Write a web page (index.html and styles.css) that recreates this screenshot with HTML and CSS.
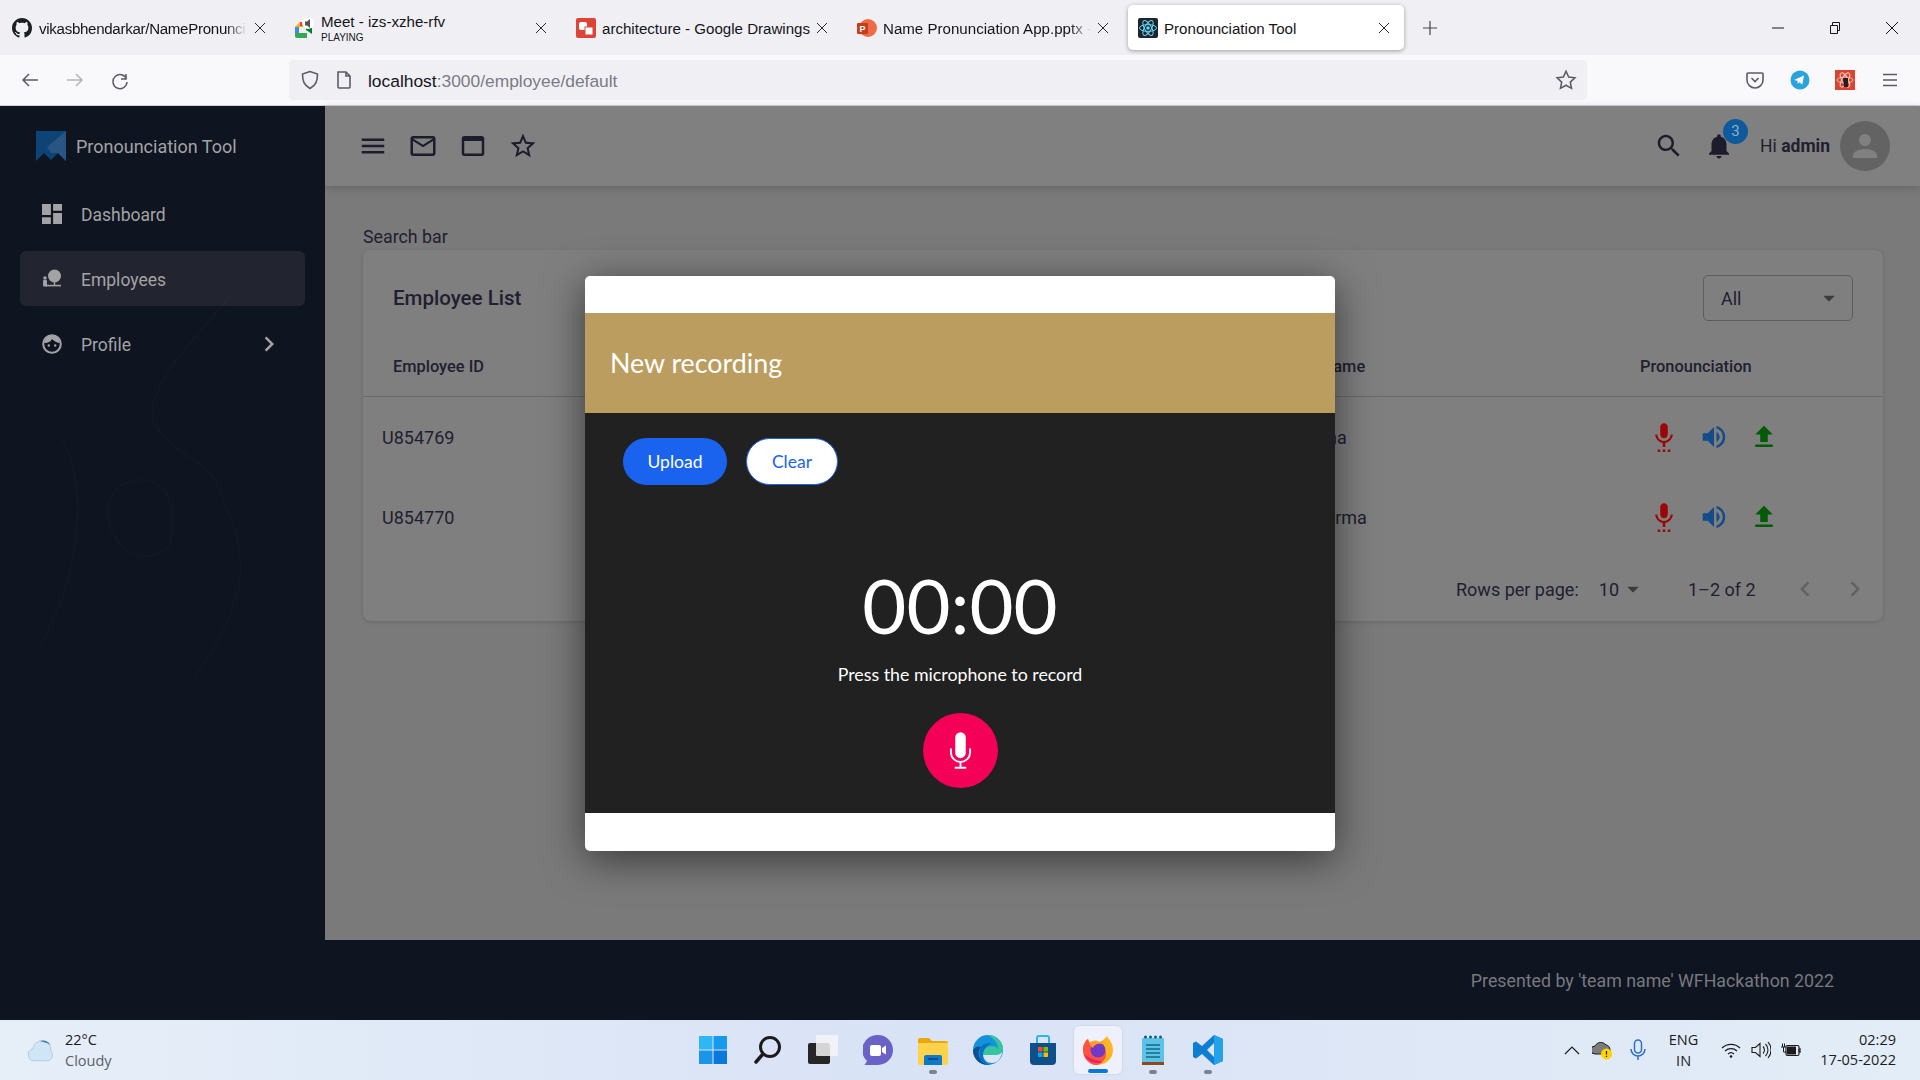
FILE: index.html
```html
<!DOCTYPE html>
<html lang="en">
<head>
    <meta charset="UTF-8">
    <title>Pronounciation Tool</title>
    <link rel="stylesheet" href="styles.css">
</head>
<body>
    <div class="tabbar">
        <div class="tab">
            <svg class="tab-icon" viewBox="0 0 16 16"><path fill="#1b1f23" d="M8 0C3.58 0 0 3.58 0 8c0 3.54 2.29 6.53 5.47 7.59.4.07.55-.17.55-.38 0-.19-.01-.82-.01-1.49-2.01.37-2.53-.49-2.69-.94-.09-.23-.48-.94-.82-1.13-.28-.15-.68-.52-.01-.53.63-.01 1.08.58 1.23.82.72 1.21 1.87.87 2.33.66.07-.52.28-.87.51-1.07-1.78-.2-3.64-.89-3.64-3.95 0-.87.31-1.59.82-2.15-.08-.2-.36-1.02.08-2.12 0 0 .67-.21 2.2.82.64-.18 1.32-.27 2-.27.68 0 1.36.09 2 .27 1.53-1.04 2.2-.82 2.2-.82.44 1.1.16 1.92.08 2.12.51.56.82 1.27.82 2.15 0 3.07-1.87 3.75-3.65 3.95.29.25.54.73.54 1.48 0 1.07-.01 1.93-.01 2.2 0 .21.15.46.55.38A8.013 8.013 0 0016 8c0-4.42-3.58-8-8-8z"/></svg>
            <span class="tab-title fade tight">vikasbhendarkar/NamePronunci</span>
            <svg class="tab-close" viewBox="0 0 12 12"><path d="M1 1l10 10M11 1L1 11"/></svg>
        </div>
        <div class="tab">
            <svg class="tab-icon" viewBox="0 0 20 20">
                <path fill="#f4b400" d="M0 9 5 4h5v5z"/>
                <path fill="#ea4335" d="M5 4h6v4H5z"/>
                <path fill="#4285f4" d="M0 9h4v7H0z"/>
                <path fill="#34a853" d="M0 15h12v5H2a2 2 0 0 1-2-2z"/>
                <path fill="#00832d" d="M11 8l6-4v12l-6-4z"/>
                <circle cx="13" cy="5" r="6" fill="#fff"/>
                <path fill="#555" d="M10 3.500h2L15 1v9l-3-2.500h-2z"/>
            </svg>
            <span class="tab-title two-line">Meet - izs-xzhe-rfv<small>PLAYING</small></span>
            <svg class="tab-close" viewBox="0 0 12 12"><path d="M1 1l10 10M11 1L1 11"/></svg>
        </div>
        <div class="tab">
            <svg class="tab-icon" viewBox="0 0 20 20">
                <rect width="20" height="20" rx="2" fill="#db4437"/>
                <rect x="3" y="4" width="8" height="8" rx="2" fill="#fff"/>
                <rect x="9" y="9" width="8" height="8" fill="#fff" stroke="#db4437"/>
            </svg>
            <span class="tab-title">architecture - Google Drawings</span>
            <svg class="tab-close" viewBox="0 0 12 12"><path d="M1 1l10 10M11 1L1 11"/></svg>
        </div>
        <div class="tab">
            <svg class="tab-icon" viewBox="0 0 20 20">
                <circle cx="11" cy="10" r="9" fill="#ed6c47"/>
                <rect x="0" y="5" width="11" height="11" rx="1" fill="#c43e1c"/>
                <text x="2.500" y="14" class="ppt-letter">P</text>
            </svg>
            <span class="tab-title fade">Name Pronunciation App.pptx -</span>
            <svg class="tab-close" viewBox="0 0 12 12"><path d="M1 1l10 10M11 1L1 11"/></svg>
        </div>
        <div class="tab tab-active">
            <svg class="tab-icon" viewBox="0 0 20 20">
                <rect width="20" height="20" rx="2" fill="#20232a"/>
                <g fill="none" stroke="#61dafb" stroke-width="1">
                    <ellipse cx="10" cy="10" rx="8.500" ry="3.400"/>
                    <ellipse cx="10" cy="10" rx="8.500" ry="3.400" transform="rotate(60 10 10)"/>
                    <ellipse cx="10" cy="10" rx="8.500" ry="3.400" transform="rotate(120 10 10)"/>
                </g>
                <circle cx="10" cy="10" r="1.700" fill="#61dafb"/>
            </svg>
            <span class="tab-title">Pronounciation Tool</span>
            <svg class="tab-close" viewBox="0 0 12 12"><path d="M1 1l10 10M11 1L1 11"/></svg>
        </div>
        <svg class="new-tab" viewBox="0 0 16 16"><path d="M8 1v14M1 8h14" stroke="#45454d" stroke-width="1.200" fill="none"/></svg>
        <div class="window-btns">
            <svg viewBox="0 0 12 12"><path d="M0 6h12" stroke="#15141a" fill="none"/></svg>
            <svg viewBox="0 0 12 12"><path d="M1.500 3.500h7v8h-7zM3.500 3.500v-3h7v8h-2" stroke="#15141a" fill="none"/></svg>
            <svg viewBox="0 0 12 12"><path d="M0 0l12 12M12 0L0 12" stroke="#15141a" fill="none"/></svg>
        </div>
    </div>

    <div class="toolbar">
        <svg class="nav-icon" viewBox="0 0 20 20"><path d="M18 10H3M9 4l-6 6 6 6" stroke="#5b5b66" stroke-width="1.500" fill="none"/></svg>
        <svg class="nav-icon" viewBox="0 0 20 20"><path d="M2 10h15M11 4l6 6-6 6" stroke="#b4b4ba" stroke-width="1.500" fill="none"/></svg>
        <svg class="nav-icon" viewBox="0 0 20 20"><path d="M16 4v5h-5M16.500 9A7 7 0 1 0 17 12" stroke="#5b5b66" stroke-width="1.500" fill="none"/></svg>
        <div class="urlbar">
            <svg class="url-icon" viewBox="0 0 20 20"><path d="M10 1.500 2.500 4c0 7 1.500 11 7.500 14.500C16 15 17.500 11 17.500 4z" stroke="#5b5b66" stroke-width="1.600" fill="none"/></svg>
            <svg class="url-icon" viewBox="0 0 20 20"><path d="M4 2h8l4 4v11a1 1 0 0 1-1 1H5a1 1 0 0 1-1-1zM12 2v4h4" stroke="#5b5b66" stroke-width="1.600" fill="none"/></svg>
            <span class="url-text"><b>localhost</b>:3000/employee/default</span>
            <svg class="url-star" viewBox="0 0 24 24"><path d="M12 2.500l2.900 6.300 6.800.8-5 4.700 1.300 6.800-6-3.400-6 3.400 1.300-6.800-5-4.700 6.800-.8z" stroke="#5b5b66" stroke-width="1.700" fill="none"/></svg>
        </div>
        <div class="ext-icons">
            <svg viewBox="0 0 20 20"><path d="M3 3h14a1 1 0 0 1 1 1v6a8 8 0 0 1-16 0V4a1 1 0 0 1 1-1zM6.500 8 10 11.500 13.500 8" stroke="#5b5b66" stroke-width="1.600" fill="none"/></svg>
            <svg viewBox="0 0 20 20"><circle cx="10" cy="10" r="9.500" fill="#2aa3dd"/><path d="M4 10l10-4.500-1.700 9-3-2.200-1.500 1.500-.4-3z" fill="#fff"/></svg>
            <svg viewBox="0 0 20 20">
                <rect width="20" height="20" fill="#d9432f"/>
                <g fill="none" stroke="#f3c6bd" stroke-width=".9">
                    <ellipse cx="10" cy="10" rx="8" ry="3"/>
                    <ellipse cx="10" cy="10" rx="8" ry="3" transform="rotate(60 10 10)"/>
                    <ellipse cx="10" cy="10" rx="8" ry="3" transform="rotate(120 10 10)"/>
                </g>
                <path d="M8 8h5v9H9z" fill="#231f20"/>
            </svg>
            <svg viewBox="0 0 20 20"><path d="M3 4.500h14M3 10h14M3 15.500h14" stroke="#5b5b66" stroke-width="1.600" fill="none"/></svg>
        </div>
    </div>

    <div class="app">
        <aside class="sidebar">
            <svg class="sidebar-map" viewBox="0 0 325 914"><path d="M230 190c-30 40-90 90-75 130 30 40 60 30 70 80 20 40 30 90-30 170M120 380c40-20 60 10 50 60-20 20-50 10-60-20-5-20 0-30 10-40M60 330c30 50 20 140-20 210" fill="none" stroke="#fff" stroke-opacity=".02" stroke-width="1.500"/></svg>
            <div class="brand">
                <svg class="brand-logo" viewBox="0 0 30 30">
                    <path fill="#0e4376" d="M0 0h30v30l-8-8-7 7-7-7-8 8z"/>
                    <path fill="#285583" d="M30 0v30l-8-8-7 0-4-6z"/>
                </svg>
                <span>Pronounciation Tool</span>
            </div>
            <nav class="side-nav">
                <a class="side-link">
                    <svg class="side-icon" viewBox="3 3 18 18"><path d="M3 13h8V3H3v10zm0 8h8v-6H3v6zm10 0h8V11h-8v10zm0-18v6h8V3h-8z"/></svg>
                    <span>Dashboard</span>
                </a>
                <a class="side-link side-link-active">
                    <svg class="side-icon" viewBox="0 0 20 20">
                        <circle cx="12.500" cy="7" r="6.500"/>
                        <rect x="11.800" y="12" width="1.400" height="5"/>
                        <rect x="3" y="15.800" width="16" height="1.600"/>
                        <circle cx="3" cy="9" r="1.800"/>
                        <rect x="1" y="11" width="4" height="6.400" rx="1"/>
                    </svg>
                    <span>Employees</span>
                </a>
                <a class="side-link">
                    <svg class="side-icon" viewBox="0 0 20 20">
                        <circle cx="10" cy="10" r="8.800" fill="none" stroke="currentColor" stroke-width="2"/>
                        <path d="M2 9c5 0 7-2 8-4 2 2 5 4 8 4-1-5-4-8-8-8S3 4 2 9z"/>
                        <circle cx="6.800" cy="11.500" r="1.200"/>
                        <circle cx="13.200" cy="11.500" r="1.200"/>
                    </svg>
                    <span>Profile</span>
                    <svg class="side-chevron" viewBox="0 0 24 24"><path d="M10 6L8.590 7.410 13.170 12l-4.580 4.590L10 18l6-6z"/></svg>
                </a>
            </nav>
        </aside>

        <div class="main">
            <header class="topbar">
                <div class="topbar-group">
                    <svg class="top-icon" viewBox="0 0 24 24"><path d="M3 18h18v-2H3v2zm0-5h18v-2H3v2zm0-7v2h18V6H3z"/></svg>
                    <svg class="top-icon" viewBox="0 0 24 24"><path d="M22 6c0-1.100-.9-2-2-2H4c-1.100 0-2 .9-2 2v12c0 1.100.9 2 2 2h16c1.100 0 2-.9 2-2V6zm-2 0l-8 5-8-5h16zm0 12H4V8l8 5 8-5v10z"/></svg>
                    <svg class="top-icon" viewBox="0 0 24 24"><path d="M19 4H5c-1.110 0-2 .9-2 2v12c0 1.100.89 2 2 2h14c1.100 0 2-.9 2-2V6c0-1.100-.89-2-2-2zm0 14H5V8h14v10z"/></svg>
                    <svg class="top-icon" viewBox="0 0 24 24"><path d="M22 9.240l-7.190-.62L12 2 9.190 8.630 2 9.240l5.460 4.730L5.820 21 12 17.270 18.180 21l-1.630-7.030L22 9.240zM12 15.400l-3.760 2.270 1-4.280-3.320-2.880 4.380-.38L12 6.100l1.710 4.040 4.380.38-3.320 2.880 1 4.280L12 15.400z"/></svg>
                </div>
                <div class="topbar-group">
                    <svg class="top-icon" viewBox="0 0 24 24"><path d="M15.500 14h-.79l-.28-.27C15.410 12.590 16 11.110 16 9.500 16 5.910 13.090 3 9.500 3S3 5.910 3 9.500 5.910 16 9.500 16c1.610 0 3.090-.59 4.230-1.570l.27.280v.79l5 4.990L20.490 19l-4.990-5zm-6 0C7.010 14 5 11.990 5 9.500S7.010 5 9.500 5 14 7.010 14 9.500 11.990 14 9.500 14z"/></svg>
                    <div class="bell">
                        <svg class="top-icon" viewBox="0 0 24 24"><path d="M12 22c1.100 0 2-.9 2-2h-4c0 1.100.9 2 2 2zm6-6v-5c0-3.070-1.630-5.640-4.500-6.320V4c0-.83-.67-1.500-1.500-1.500s-1.500.67-1.500 1.500v.68C7.640 5.360 6 7.920 6 11v5l-2 2v1h16v-1l-2-2z"/></svg>
                        <span class="badge">3</span>
                    </div>
                </div>
                <div class="user">
                    <span>Hi <b>admin</b></span>
                    <div class="avatar">
                        <svg viewBox="0 0 24 24"><path d="M12 12c2.210 0 4-1.790 4-4s-1.790-4-4-4-4 1.790-4 4 1.790 4 4 4zm0 2c-2.670 0-8 1.340-8 4v2h16v-2c0-2.660-5.330-4-8-4z"/></svg>
                    </div>
                </div>
            </header>

            <main class="content">
                <p class="search-label">Search bar</p>
                <section class="card">
                    <div class="card-head">
                        <h2>Employee List</h2>
                        <div class="select">
                            <span>All</span>
                            <svg viewBox="0 0 24 24"><path d="M7 10l5 5 5-5z"/></svg>
                        </div>
                    </div>
                    <div class="emp-row emp-head">
                        <span class="cell-id">Employee ID</span>
                        <span>Last Name</span>
                        <span>Pronounciation</span>
                    </div>
                    <div class="emp-row">
                        <span>U854769</span>
                        <span>Krishna</span>
                        <div class="actions">
                            <svg class="act-mic" viewBox="0 0 24 24"><path d="M7 24h2v-2H7v2zm5-11c1.660 0 2.990-1.340 2.990-3L15 4c0-1.660-1.340-3-3-3S9 2.340 9 4v6c0 1.660 1.340 3 3 3zm-1 11h2v-2h-2v2zm4 0h2v-2h-2v2zm4-14h-1.700c0 3-2.540 5.100-5.300 5.100S6.700 13 6.700 10H5c0 3.410 2.720 6.230 6 6.720V20h2v-3.280c3.280-.49 6-3.310 6-6.720z"/></svg>
                            <svg class="act-play" viewBox="0 0 24 24"><path d="M3 9v6h4l5 5V4L7 9H3zm13.500 3c0-1.770-1.020-3.290-2.500-4.030v8.050c1.480-.73 2.500-2.250 2.500-4.020zM14 3.230v2.060c2.890.86 5 3.540 5 6.710s-2.110 5.850-5 6.710v2.060c4.010-.91 7-4.490 7-8.770s-2.990-7.860-7-8.770z"/></svg>
                            <svg class="act-up" viewBox="0 0 24 24"><path d="M9 16h6v-6h4l-7-7-7 7h4zm-4 2h14v2H5z"/></svg>
                        </div>
                    </div>
                    <div class="emp-row">
                        <span>U854770</span>
                        <span>Jai Verma</span>
                        <div class="actions">
                            <svg class="act-mic" viewBox="0 0 24 24"><path d="M7 24h2v-2H7v2zm5-11c1.660 0 2.990-1.340 2.990-3L15 4c0-1.660-1.340-3-3-3S9 2.340 9 4v6c0 1.660 1.340 3 3 3zm-1 11h2v-2h-2v2zm4 0h2v-2h-2v2zm4-14h-1.700c0 3-2.540 5.100-5.300 5.100S6.700 13 6.700 10H5c0 3.410 2.720 6.230 6 6.720V20h2v-3.280c3.280-.49 6-3.310 6-6.720z"/></svg>
                            <svg class="act-play" viewBox="0 0 24 24"><path d="M3 9v6h4l5 5V4L7 9H3zm13.500 3c0-1.770-1.020-3.290-2.500-4.030v8.050c1.480-.73 2.500-2.250 2.500-4.020zM14 3.230v2.060c2.890.86 5 3.540 5 6.710s-2.110 5.850-5 6.710v2.060c4.010-.91 7-4.490 7-8.770s-2.990-7.860-7-8.770z"/></svg>
                            <svg class="act-up" viewBox="0 0 24 24"><path d="M9 16h6v-6h4l-7-7-7 7h4zm-4 2h14v2H5z"/></svg>
                        </div>
                    </div>
                    <div class="pager">
                        <span>Rows per page:</span>
                        <div class="pager-size">
                            <span>10</span>
                            <svg viewBox="0 0 24 24"><path d="M7 10l5 5 5-5z"/></svg>
                        </div>
                        <span class="pager-range">1&#8211;2 of 2</span>
                        <div class="pager-nav">
                            <svg viewBox="0 0 24 24"><path d="M15.410 7.410 14 6l-6 6 6 6 1.410-1.410L10.830 12z"/></svg>
                            <svg viewBox="0 0 24 24"><path d="M10 6L8.590 7.410 13.170 12l-4.580 4.590L10 18l6-6z"/></svg>
                        </div>
                    </div>
                </section>
            </main>

            <footer class="page-foot">Presented by 'team name' WFHackathon 2022</footer>
        </div>

        <div class="overlay">
            <div class="modal">
                <div class="modal-title">New recording</div>
                <div class="recorder">
                    <div class="rec-btns">
                        <button class="btn btn-fill" type="button">Upload</button>
                        <button class="btn btn-line" type="button">Clear</button>
                    </div>
                    <div class="rec-time">00:00</div>
                    <div class="rec-hint">Press the microphone to record</div>
                    <button class="rec-mic" type="button">
                        <svg viewBox="0 0 24 38">
                            <rect x="6.500" y="0" width="11" height="27" rx="5.500" fill="#fff"/>
                            <path d="M2 17v4a10 10 0 0 0 20 0v-4M12 31v6M6 37h12" stroke="#fff" stroke-width="2" fill="none"/>
                        </svg>
                    </button>
                </div>
            </div>
        </div>
    </div>

    <div class="taskbar">
        <div class="weather">
            <svg viewBox="0 0 30 24">
                <path d="M8 23a6.500 6.500 0 0 1-2-12.700C7.500 4 13 0 18 2c5 1 8 5 7.500 10 3 3 2 11-3 11z" fill="#cfe6f7" stroke="#b9c6d2"/>
                <path d="M14 2c4-2 9 0 11 4-4-3-8-3-11-4z" fill="#3f7fb8"/>
            </svg>
            <div>
                <div>22&deg;C</div>
                <div class="weather-sub">Cloudy</div>
            </div>
        </div>
        <div class="task-apps">
            <div class="task-app">
                <svg viewBox="0 0 30 30">
                    <path fill="#2fb6f5" d="M1 1h13.500v13.500H1z"/><path fill="#159aee" d="M15.500 1H29v13.500H15.500z"/>
                    <path fill="#1a95ea" d="M1 15.500h13.500V29H1z"/><path fill="#0a78d8" d="M15.500 15.500H29V29H15.500z"/>
                </svg>
            </div>
            <div class="task-app">
                <svg viewBox="0 0 30 30"><circle cx="17" cy="12" r="9.500" fill="none" stroke="#1c1c1c" stroke-width="3"/><path d="M10 19l-7 8" stroke="#1c1c1c" stroke-width="3.500" stroke-linecap="round"/></svg>
            </div>
            <div class="task-app">
                <svg viewBox="0 0 30 30"><rect x="0" y="8" width="22" height="21" rx="2" fill="#262626"/><rect x="8" y="0" width="22" height="21" rx="1" fill="#f4f4f6" fill-opacity=".85"/></svg>
            </div>
            <div class="task-app">
                <svg viewBox="0 0 30 30">
                    <path d="M15 0a15 15 0 0 1 0 30H1.500l2.500-4A15 15 0 0 1 15 0z" fill="#6a62c6"/>
                    <rect x="7" y="10" width="11" height="11" rx="2" fill="#fff"/><path d="M19 13l4-2.500v9L19 17z" fill="#fff"/>
                </svg>
            </div>
            <div class="task-app task-open">
                <svg viewBox="0 0 30 30">
                    <path d="M0 5a2 2 0 0 1 2-2h9l3 3h14a2 2 0 0 1 2 2v20H0z" fill="#e8a90f"/>
                    <path d="M0 8h30v20a2 2 0 0 1-2 2H2a2 2 0 0 1-2-2z" fill="#ffd24c"/>
                    <path d="M6 22a2 2 0 0 1 2-2h14a2 2 0 0 1 2 2v8H6z" fill="#0f79c9"/><path d="M10 24h10" stroke="#073f78" stroke-width="1.500"/>
                </svg>
            </div>
            <div class="task-app">
                <svg viewBox="0 0 30 30">
                    <circle cx="15" cy="15" r="15" fill="#1493dc"/>
                    <path d="M15 0c8 0 15 6 15 14 0 4-3 6-7 6H10c0-6 4-9 9-9 3 0 5 1 6 3 0-7-5-11-10-14z" fill="#37c5a0"/>
                    <path d="M8 12C3 17 6 27 15 30 7 30 0 24 0 15 3 11 6 11 8 12z" fill="#0c4f94"/>
                    <path d="M10 20h13c2 0 5-1 6.500-3-1 4-3 8-6 10-7 3-13-1-13.500-7z" fill="#dbe5f6"/>
                    <path d="M8 12c2-3 7-5 11-3-5 0-9 5-9 11 0 5 3 9 8 10-1 0-2 0-3 0-7-2-11-11-7-18z" fill="#0c6fbd"/>
                </svg>
            </div>
            <div class="task-app">
                <svg viewBox="0 0 30 30">
                    <path d="M2 8h26v18a4 4 0 0 1-4 4H6a4 4 0 0 1-4-4z" fill="#0f4f8a"/>
                    <path d="M9 8V3a2 2 0 0 1 2-2h8a2 2 0 0 1 2 2v5" fill="none" stroke="#2bb6e8" stroke-width="2"/>
                    <path fill="#f25022" d="M10 12h4.500v4.500H10z"/><path fill="#7fba00" d="M15.500 12H20v4.500h-4.500z"/>
                    <path fill="#00a4ef" d="M10 17.500h4.500V22H10z"/><path fill="#ffb900" d="M15.500 17.500H20V22h-4.500z"/>
                </svg>
            </div>
            <div class="task-app task-tile">
                <svg viewBox="0 0 30 30">
                    <path d="M24 1c2 4 6 7 6 14A15 15 0 0 1 0 15C0 10 2 6 5 4l1 4c3-3 8-3 10-1 3-1 6-3 8-6z" fill="#ffb423"/>
                    <path d="M0 15c0-5 2-9 5-11l2 5c3 2 12 1 15 6 4 9-5 15-9 15C6 30 0 23 0 15z" fill="#ff5340"/>
                    <circle cx="15" cy="15" r="7.500" fill="#7139c4"/>
                    <path d="M7 8c4-2 10-2 13 1-4-1-9 0-10 4-2-1-3-3-3-5z" fill="#ff9a2e"/>
                    <path d="M20 27c-8 3-16-1-19-8 5 5 12 6 19 8z" fill="#e91e70"/>
                </svg>
            </div>
            <div class="task-app task-open task-narrow">
                <svg viewBox="0 0 22 30">
                    <rect x="0" y="3" width="22" height="25" rx="1" fill="#5cc3e6"/>
                    <rect x="0" y="27" width="22" height="3" fill="#8a4a24"/>
                    <path d="M4 10h14M4 14h14M4 18h14M4 22h14" stroke="#14688c" stroke-width="1.600"/>
                    <g fill="#0f5c7e"><circle cx="3.500" cy="2" r="1.500"/><circle cx="8.500" cy="2" r="1.500"/><circle cx="13.500" cy="2" r="1.500"/><circle cx="18.500" cy="2" r="1.500"/></g>
                </svg>
            </div>
            <div class="task-app task-open">
                <svg viewBox="0 0 30 30">
                    <path d="M21 0l9 4v22l-9 4-12-11-6 4.500-3-1.500v-14l3-1.500L9 11z" fill="#0e7fd0"/>
                    <path d="M21 0l9 4v22l-9 4z" fill="#23a2ea"/>
                    <path d="M21 8v14l-7-7z" fill="#dbe5f6"/>
                </svg>
            </div>
        </div>
        <div class="tray">
            <svg class="tray-icon tray-small" viewBox="0 0 16 10"><path d="M1 9l7-7 7 7" stroke="#1c1c1c" stroke-width="1.200" fill="none"/></svg>
            <svg class="tray-icon" viewBox="0 0 20 20">
                <path d="M3 14a4 4 0 0 1 0-8c2-4 8-5 11-1 2 0 4 2 4 5v4z" fill="#7c7c7c" stroke="#1c1c1c"/>
                <circle cx="14.500" cy="14" r="5.500" fill="#ffd400"/><path d="M14.500 11v3.500M14.500 15.800v1.200" stroke="#1c1c1c" stroke-width="1.200"/>
            </svg>
            <svg class="tray-mic" viewBox="0 0 16 22"><rect x="4.500" y="1" width="7" height="13" rx="3.500" fill="none" stroke="#2f6fc4" stroke-width="1.500"/><path d="M1 10a7 7 0 0 0 14 0M8 17v4" fill="none" stroke="#2f6fc4" stroke-width="1.500"/></svg>
            <div class="tray-lang"><div>ENG</div><div>IN</div></div>
            <svg class="tray-icon" viewBox="0 0 20 16"><path d="M1 6a13 13 0 0 1 18 0M4 9a9 9 0 0 1 12 0M7 12a4.500 4.500 0 0 1 6 0" fill="none" stroke="#1c1c1c" stroke-width="1.200"/><circle cx="10" cy="14.500" r="1.300" fill="#1c1c1c"/></svg>
            <svg class="tray-icon" viewBox="0 0 20 18"><path d="M1 6.500h3.500L9 2.500v13l-4.500-4H1zM12 5.500a5 5 0 0 1 0 7M14.500 3a8.500 8.500 0 0 1 0 12M17 1a12 12 0 0 1 0 16" fill="none" stroke="#1c1c1c" stroke-width="1.100"/></svg>
            <svg class="tray-icon" viewBox="0 0 20 16"><rect x="5" y="3.500" width="13" height="10" rx="1.500" fill="none" stroke="#1c1c1c" stroke-width="1.200"/><path d="M6 4.500h9v8H6z" fill="#1c1c1c"/><path d="M18 7h2v3h-2zM0 5h5M1.500 1.500v3.500M3.500 1.500v3.500M2.500 5v5h3" fill="none" stroke="#1c1c1c"/></svg>
            <div class="tray-clock"><div>02:29</div><div>17-05-2022</div></div>
        </div>
    </div>
</body>
</html>
```

FILE: styles.css
```css
* {
  box-sizing: border-box;
}
html, body {
  height: 100%;
}
body {
  display: flex;
  flex-direction: column;
  margin: 0;
  overflow: hidden;
  font-family: "Roboto", "Liberation Sans", sans-serif;
}
svg {
  display: block;
  flex: none;
}

/* browser chrome */
.tabbar {
  display: flex;
  align-items: center;
  gap: 5px;
  height: 55px;
  padding: 0 0 0 4px;
  background: #f0f0f4;
  color: #15141a;
  font-family: "Liberation Sans", sans-serif;
  font-size: 15.100px;
}
.tab {
  display: flex;
  align-items: center;
  gap: 6px;
  width: 276px;
  height: 45px;
  padding: 0 14px 0 10px;
}
.tab:first-child {
  gap: 7px;
  padding-left: 8px;
}
.tab-active {
  border-radius: 5px;
  background: #fff;
  box-shadow: 0 1px 4px rgba(0, 0, 0, .35);
}
.tab-icon {
  width: 20px;
  height: 20px;
}
.ppt-letter {
  fill: #fff;
  font-size: 9px;
  font-weight: bold;
}
.tab-title {
  flex: 1;
  padding-top: 2px;
  overflow: hidden;
  white-space: nowrap;
}
.tab-title small {
  display: block;
  margin-top: 2px;
  font-size: 10px;
  line-height: 11px;
}
.two-line {
  padding-top: 0;
  line-height: 17px;
}
.tight {
  letter-spacing: -.3px;
}
.fade {
  -webkit-mask-image: linear-gradient(90deg, #000 90%, transparent);
  mask-image: linear-gradient(90deg, #000 90%, transparent);
}
.tab-close {
  width: 12px;
  height: 12px;
  fill: none;
  stroke: #2b2a33;
  stroke-width: 1;
}
.new-tab {
  width: 16px;
  height: 16px;
  margin-left: 13px;
}
.window-btns {
  display: flex;
  gap: 45px;
  margin-left: auto;
  padding-right: 22px;
}
.window-btns svg {
  width: 12px;
  height: 12px;
}
.toolbar {
  display: flex;
  align-items: center;
  height: 51px;
  padding-left: 20px;
  background: #f9f9fb;
  border-bottom: 1px solid #cfcfd8;
}
.nav-icon {
  width: 20px;
  height: 20px;
  margin-right: 25px;
}
.urlbar {
  display: flex;
  align-items: center;
  gap: 14px;
  width: 1298px;
  height: 40px;
  margin-left: 134px;
  padding: 0 10px 0 11px;
  border-radius: 4px;
  background: #f0f0f4;
}
.url-icon {
  width: 20px;
  height: 20px;
}
.url-text {
  flex: 1;
  padding-top: 2px;
  color: #7b7b85;
  font-family: "Liberation Sans", sans-serif;
  font-size: 17.400px;
}
.url-text b {
  color: #15141a;
  font-weight: normal;
}
.url-star {
  width: 22px;
  height: 22px;
}
.ext-icons {
  display: flex;
  gap: 25px;
  margin-left: 158px;
}
.ext-icons svg {
  width: 20px;
  height: 20px;
}

/* the app behind the dialog, painted in its dimmed colours */
.app {
  position: relative;
  display: flex;
  flex: 1;
  min-height: 0;
}
.sidebar {
  position: relative;
  flex: none;
  width: 325px;
  background: #0f1421;
  color: #a3a3a5;
  font-size: 17.500px;
}
.sidebar-map {
  position: absolute;
  top: 0;
  left: 0;
  width: 325px;
  height: 914px;
}
.brand {
  display: flex;
  align-items: center;
  gap: 10px;
  height: 80px;
  padding-left: 36px;
  font-size: 18px;
}
.brand-logo {
  width: 30px;
  height: 30px;
}
.side-nav {
  display: flex;
  flex-direction: column;
  gap: 10px;
  padding: 0 20px;
}
.side-link {
  display: flex;
  align-items: center;
  height: 55px;
  padding: 0 24px 0 22px;
  border-radius: 6px;
}
.side-link span {
  padding-top: 2px;
}
.side-link-active {
  background: #22242f;
}
.side-icon {
  width: 20px;
  height: 20px;
  margin-right: 19px;
  fill: currentColor;
}
.side-chevron {
  width: 30px;
  height: 30px;
  margin-left: auto;
  margin-right: -3px;
  fill: currentColor;
}
.main {
  display: flex;
  flex: 1;
  flex-direction: column;
  min-width: 0;
  background: #7a7a7a;
  color: #1f2030;
  font-size: 18px;
}
.topbar {
  display: flex;
  align-items: center;
  height: 80px;
  padding: 0 30px 0 33px;
  background: #808080;
  box-shadow: 0 2px 8px rgba(0, 0, 0, .18);
}
.topbar-group {
  display: flex;
  align-items: center;
  gap: 20px;
}
.topbar-group + .topbar-group {
  margin-left: auto;
}
.top-icon {
  width: 30px;
  height: 30px;
  fill: #1c1c2c;
}
.bell {
  position: relative;
}
.badge {
  position: absolute;
  top: -12px;
  left: 19px;
  width: 25px;
  height: 25px;
  border-radius: 50%;
  background: #0f5a9c;
  color: #8fb0cf;
  font-size: 15px;
  line-height: 25px;
  text-align: center;
}
.user {
  display: flex;
  align-items: center;
  gap: 10px;
  margin-left: 26px;
  font-size: 17.500px;
}
.user b {
  font-weight: 700;
}
.avatar {
  display: flex;
  align-items: center;
  justify-content: center;
  width: 50px;
  height: 50px;
  border-radius: 50%;
  background: #636363;
}
.avatar svg {
  width: 36px;
  height: 36px;
  fill: #808080;
}
.content {
  flex: 1;
  padding: 38px 37px 0 38px;
}
.search-label {
  height: 26px;
  margin: 0;
  font-size: 17.800px;
  line-height: 26px;
}
.card {
  border-radius: 8px;
  background: #7f7f7f;
  box-shadow: 0 1px 4px rgba(0, 0, 0, .15);
}
.card-head {
  display: flex;
  justify-content: space-between;
  height: 85px;
  padding: 25px 30px 0;
}
.card-head h2 {
  margin: 0;
  font-size: 20.500px;
  font-weight: 500;
  line-height: 46px;
}
.select {
  display: flex;
  align-items: center;
  justify-content: space-between;
  width: 150px;
  height: 46px;
  padding: 0 9px 0 17px;
  border: 1px solid #5d5d5d;
  border-radius: 5px;
}
.select svg, .pager-size svg {
  width: 28px;
  height: 28px;
  fill: #3c3c3c;
}
.emp-row {
  display: grid;
  grid-template-columns: 904px 354px 1fr;
  align-items: center;
  height: 80px;
  padding-left: 19px;
}
.emp-head {
  height: 62px;
  padding-top: 2px;
  border-bottom: 1px solid #6a6a6a;
  font-size: 16.400px;
  font-weight: 500;
}
.cell-id {
  padding-left: 11px;
}
.actions {
  display: flex;
  gap: 20px;
  margin: 0 0 0 9px;
}
.actions svg {
  width: 30px;
  height: 30px;
}
.act-mic {
  fill: #9c0606;
}
.act-play {
  fill: #154c88;
}
.act-up {
  fill: #055a05;
}
.pager {
  display: flex;
  align-items: center;
  height: 64px;
  padding-left: 1093px;
  font-size: 18px;
}
.pager-size {
  display: flex;
  align-items: center;
  margin-left: 20px;
}
.pager-range {
  margin-left: 41px;
}
.pager-nav {
  display: flex;
  gap: 20px;
  margin-left: 34px;
}
.pager-nav svg {
  width: 30px;
  height: 30px;
  fill: #626262;
}
.page-foot {
  height: 80px;
  padding-right: 86px;
  background: #0f1421;
  color: #77797f;
  font-size: 17.800px;
  line-height: 82px;
  text-align: right;
}

/* dialog */
.overlay {
  position: absolute;
  top: 0;
  left: 0;
  right: 0;
  bottom: 0;
  display: flex;
  align-items: center;
  justify-content: center;
}
.modal {
  width: 750px;
  padding: 37px 0 38px;
  border-radius: 5px;
  background: #fff;
  box-shadow: 0 8px 40px rgba(0, 0, 0, .55);
  font-family: "Lato", sans-serif;
}
.modal-title {
  height: 100px;
  padding-left: 25px;
  background: #bb9d60;
  color: #fff;
  font-size: 26.800px;
  line-height: 100px;
}
.recorder {
  display: flex;
  flex-direction: column;
  align-items: center;
  height: 400px;
  padding-top: 25px;
  background: #212121;
  color: #fff;
}
.rec-btns {
  display: flex;
  align-self: flex-start;
  gap: 19px;
  padding-left: 38px;
}
.btn {
  height: 47px;
  border-radius: 24px;
  font-family: "Lato", sans-serif;
  font-size: 17.500px;
}
.btn-fill {
  width: 104px;
  border: 0;
  background: #1a63ee;
  color: #fff;
}
.btn-line {
  width: 92px;
  border: 1px solid #1a63ee;
  background: #fff;
  color: #1a63ee;
}
.rec-time {
  margin-top: 72px;
  font-size: 76px;
  font-weight: 400;
  line-height: 96px;
}
.rec-hint {
  margin-top: 7px;
  font-size: 17.800px;
  line-height: 28px;
}
.rec-mic {
  display: flex;
  align-items: center;
  justify-content: center;
  width: 75px;
  height: 75px;
  margin-top: 25px;
  padding: 0;
  border: 0;
  border-radius: 50%;
  background: #f50057;
}
.rec-mic svg {
  width: 23px;
  height: 37px;
}

/* windows taskbar */
.taskbar {
  position: relative;
  display: flex;
  align-items: center;
  flex: none;
  height: 60px;
  padding: 0 24px 0 27px;
  background: linear-gradient(90deg, #e6eff8, #d9e3f6 45%, #dbe5f6 62%, #e3edf7);
  color: #1c1c1c;
  font-family: "Open Sans", sans-serif;
  font-size: 14.500px;
}
.weather {
  display: flex;
  align-items: center;
  gap: 10px;
  line-height: 21px;
}
.weather svg {
  width: 28px;
  height: 23px;
}
.weather-sub {
  color: #5c6066;
}
.task-apps {
  position: absolute;
  top: 6px;
  left: 698px;
  display: flex;
  align-items: center;
}
.task-app {
  position: relative;
  display: flex;
  align-items: center;
  justify-content: center;
  width: 30px;
  height: 48px;
  margin-right: 25px;
}
.task-app svg {
  width: 30px;
  height: 30px;
}
.task-open::after {
  content: '';
  position: absolute;
  bottom: 0;
  left: 50%;
  width: 8px;
  height: 4px;
  margin-left: -4px;
  border-radius: 2px;
  background: #7b8290;
}
.task-tile {
  width: 48px;
  margin: 0 20px 0 -9px;
  border-radius: 5px;
  background: #eef1fb;
  box-shadow: 0 0 2px rgba(0, 0, 0, .15);
}
.task-tile::after {
  content: '';
  position: absolute;
  bottom: 1px;
  left: 14px;
  width: 20px;
  height: 4px;
  border-radius: 2px;
  background: #0a78d8;
}
.task-narrow {
  width: 22px;
  margin-right: 29px;
}
.task-narrow svg {
  width: 22px;
}
.tray {
  display: flex;
  align-items: center;
  margin-left: auto;
}
.tray-icon {
  width: 20px;
  height: 20px;
  margin-right: 10px;
}
.tray-small {
  width: 16px;
  height: 10px;
  margin-right: 12px;
}
.tray-mic {
  width: 16px;
  height: 22px;
  margin-left: 8px;
}
.tray-lang {
  margin: 0 23px;
  line-height: 21px;
  text-align: center;
}
.tray-clock {
  margin-left: 9px;
  line-height: 20px;
  text-align: right;
}
```
